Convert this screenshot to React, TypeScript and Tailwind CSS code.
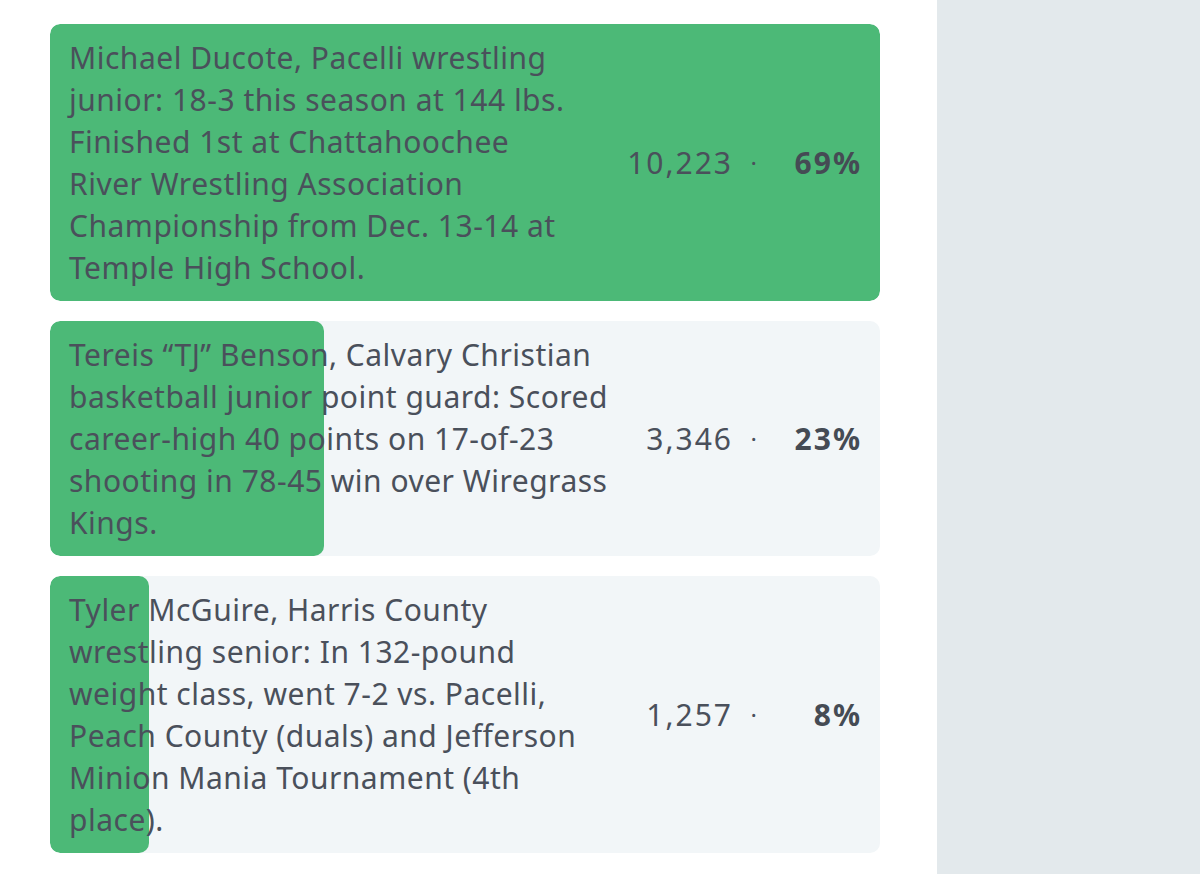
import React from 'react';

type PollOption = {
  id: number;
  text: string;
  votes: string;
  percent: number;
  bar: number;
};

const options: PollOption[] = [
  {
    id: 1,
    text: 'Michael Ducote, Pacelli wrestling junior: 18-3 this season at 144 lbs. Finished 1st at Chattahoochee River\u00a0Wrestling Association Championship from Dec. 13-14 at Temple High School.',
    votes: '10,223',
    percent: 69,
    bar: 100,
  },
  {
    id: 2,
    text: 'Tereis \u201cTJ\u201d Benson, Calvary Christian basketball junior point guard: Scored career-high 40 points on 17-of-23 shooting in 78-45 win over Wiregrass Kings.',
    votes: '3,346',
    percent: 23,
    bar: 33,
  },
  {
    id: 3,
    text: 'Tyler McGuire, Harris County wrestling senior: In 132-pound weight class, went 7-2 vs. Pacelli, Peach County (duals) and Jefferson Minion Mania Tournament (4th place).',
    votes: '1,257',
    percent: 8,
    bar: 11.9,
  },
];

function ResultRow({ option }: { option: PollOption }) {
  return (
    <div className="relative rounded-[10px] bg-[#f2f6f8] overflow-hidden">
      {/* vote share bar */}
      <div
        className="absolute left-0 top-0 bottom-0 rounded-[10px] bg-[#4cb977]"
        style={{ width: `${option.bar}%` }}
      />
      <div className="relative flex items-center gap-8 pl-[19px] pr-[20px] pt-[13px] pb-[12px] text-[30px] leading-[42px] tracking-[0.5px] text-[#4a505b]">
        <p className="flex-1">{option.text}</p>
        <div className="flex items-center whitespace-nowrap">
          <span className="tracking-[2px] -mr-[2px]">{option.votes}</span>
          <span className="w-[46px] text-center text-[24px]">·</span>
          <span className="w-[85px] text-right font-bold tracking-[2px] -mr-[2px] text-[#454b54]">
            {option.percent}%
          </span>
        </div>
      </div>
    </div>
  );
}

export default function App() {
  return (
    <div
      className="flex min-h-screen bg-white"
      style={{ fontFamily: '"Noto Sans", sans-serif' }}
    >
      <main className="w-[937px] shrink-0 pl-[50px] pr-[57px] pt-[24px]">
        <div className="flex flex-col gap-[20px]">
          {options.map((o) => (
            <ResultRow key={o.id} option={o} />
          ))}
        </div>
      </main>
      <aside className="flex-1 bg-[#e3e9ec]" />
    </div>
  );
}
